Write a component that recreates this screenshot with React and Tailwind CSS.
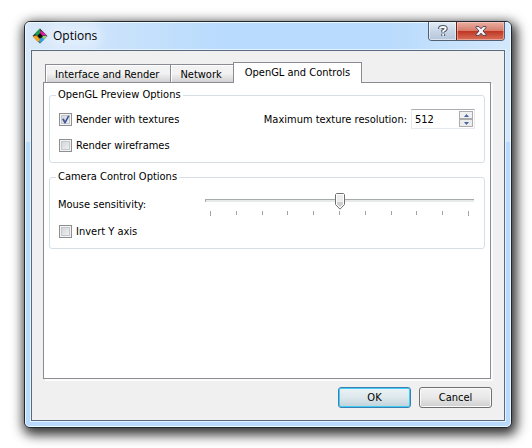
import React, { useState } from 'react';

const TABS = ['Interface and Render', 'Network', 'OpenGL and Controls'];
const TICKS = [0, 1, 2, 3, 4, 5, 6, 7, 8, 9, 10];

const AppIcon = () => (
  <svg viewBox="0 0 16 16" className="h-4 w-4" aria-hidden="true">
    <path d="M8 0.5L15.5 8L8 15.5L0.5 8Z" fill="#2a3a3a" />
    <path d="M8 0.5V5L5 8L3 5.5Z" fill="#1f9f4a" />
    <path d="M8.5 2.5L13.5 6L14 7.5H10.5L8 5Z" fill="#e0109a" />
    <path d="M15 8L12 11.5L10 10L11 8Z" fill="#8fd36a" />
    <path d="M8 15L6.5 12.5L8.5 10L12 10.5V12Z" fill="#2b9fe0" />
    <path d="M1 8.2L4.5 7.5L8 11L7 13.5H5Z" fill="#f5a21b" />
    <path d="M8 5.5L10.5 8L8 10.5L5.5 8Z" fill="#080808" />
  </svg>
);

const TitleBar = () => (
  <div className="flex h-7 items-start justify-between pl-[7px] pr-[6px]">
    <div className="flex items-center pt-[6px]">
      <AppIcon />
      <span className="ml-[5px] rounded-full bg-white/30 font-['Open_Sans','Noto_Sans',sans-serif] text-[12px] leading-4 text-black shadow-[0_0_10px_6px_rgba(255,255,255,0.3)]">
        Options
      </span>
    </div>
    <div className="flex h-[19px] overflow-hidden rounded-b-[4px] border border-t-0 border-[#525f70]">
      <button
        type="button"
        aria-label="Help"
        className="flex w-[27px] items-center justify-center bg-linear-to-b from-[#e3ecf6] from-0% via-[#c9d6e6] via-50% to-[#b4c5dc] shadow-[inset_0_0_0_1px_rgba(255,255,255,0.5)]"
      >
        <svg viewBox="0 0 10 12" className="h-3 w-[10px]" fill="none" aria-hidden="true">
          <path d="M2 4V3.2Q2.5 2 5 2T7.8 3.6Q7.8 4.8 5.2 6V7.5M5.2 8.8V11" stroke="#4b5365" strokeWidth="3.8" />
          <path d="M2 3.8V3.2Q2.5 2 5 2T7.8 3.6Q7.8 4.8 5.2 6V7.3M5.2 9V10.7" stroke="#fff" strokeWidth="1.9" />
        </svg>
      </button>
      <button
        type="button"
        aria-label="Close"
        className="flex w-[48px] items-center justify-center border-l border-[#6e2118] bg-[linear-gradient(to_bottom,#eab0a4,#d67d6c_48%,#bf3722_52%,#d8705a)] shadow-[inset_0_0_0_1px_rgba(255,210,200,0.5)]"
      >
        <svg viewBox="0 0 12 10" className="h-[10px] w-3" aria-hidden="true">
          <path
            d="M1 .6H4L6 2.8L8 .6H11V1.6L8 5L11 8.4V9.4H8L6 7.2L4 9.4H1V8.4L4 5L1 1.6Z"
            fill="#f6f6f6"
            stroke="#54435a"
            strokeWidth="1"
          />
        </svg>
      </button>
    </div>
  </div>
);

const Group = ({ title, className, children }) => (
  <fieldset className={`min-w-0 rounded-[3px] border border-[#d5dfe5] px-2 ${className}`}>
    <legend className="-ml-[2px] px-[2px] leading-[14px]">{title}</legend>
    {children}
  </fieldset>
);

const CheckBox = ({ label, defaultChecked = false }) => (
  <label className="flex h-5 items-center gap-1 pl-px">
    <span className="relative flex h-[13px] w-[13px]">
      <input
        type="checkbox"
        defaultChecked={defaultChecked}
        className="peer h-[13px] w-[13px] appearance-none border border-[#8e8f8f] bg-linear-to-br from-[#cbcfd5] to-[#f6f6f6] shadow-[inset_0_0_0_1px_#f4f4f4,inset_0_0_0_2px_#c3c8ce]"
      />
      <svg
        viewBox="0 0 13 13"
        className="pointer-events-none absolute inset-0 hidden h-[13px] w-[13px] peer-checked:block"
        aria-hidden="true"
      >
        <path d="M3 6L5 5.5L6 8L9 2.5L10.5 3L6.5 10.5H5.5Z" fill="#405399" />
      </svg>
    </span>
    <span className="pt-[2px]">{label}</span>
  </label>
);

const SpinBox = ({ id }) => {
  const [value, setValue] = useState(512);

  return (
    <div className="flex h-5 w-16 border border-[#e3e9ef] border-t-[#abadb3] bg-white py-px pr-px">
      <input
        id={id}
        type="text"
        value={value}
        onChange={(e) => setValue(Number(e.target.value) || 0)}
        className="min-w-0 flex-1 pt-[2px] pl-[3px] outline-none"
      />
      <div className="flex w-[14px] flex-col">
        <button
          type="button"
          aria-label="Increase"
          onClick={() => setValue(value + 1)}
          className="flex flex-1 items-center justify-center border border-[#acacac] bg-[#f0f0f0]"
        >
          <svg viewBox="0 0 5 3" className="h-[3px] w-[5px]" aria-hidden="true">
            <path d="M0 3L2.5 0L5 3Z" fill="#4a62a3" />
          </svg>
        </button>
        <button
          type="button"
          aria-label="Decrease"
          onClick={() => setValue(value - 1)}
          className="flex flex-1 items-center justify-center border border-[#acacac] bg-[#ececec]"
        >
          <svg viewBox="0 0 5 3" className="h-[3px] w-[5px]" aria-hidden="true">
            <path d="M0 0L2.5 3L5 0Z" fill="#4a62a3" />
          </svg>
        </button>
      </div>
    </div>
  );
};

const Slider = ({ id }) => {
  const [value, setValue] = useState(5);

  return (
    <div className="relative flex-1 pt-[6px]">
      <div className="h-[3px] border-t border-l border-t-[#a5aaaa] border-l-[#a5aaaa] bg-[#e7eaea]" />
      <div className="mt-[9px] flex h-[5px] justify-between px-[5px]">
        {TICKS.map((t) => (
          <span key={t} className="h-1 w-px bg-[#a5a498] first:h-[5px] last:h-[5px]" />
        ))}
      </div>
      {/* Thumb */}
      <div className="pointer-events-none absolute inset-x-[5px] top-0">
        <svg
          viewBox="0 0 10 17"
          className="absolute top-0 h-[17px] w-[10px] -translate-x-1/2"
          style={{ left: `${value * 10}%` }}
          aria-hidden="true"
        >
          <path d="M1.5 .5H8.5L9.5 1.5V11.5L5 16.2L.5 11.5V1.5Z" fill="#fff" stroke="#6f6f6f" />
          <path d="M2 2H8V9H2Z" fill="#ededed" />
          <path d="M2 9H8V11.2L5 14.2L2 11.2Z" fill="#cfcfcf" />
        </svg>
      </div>
      <input
        id={id}
        type="range"
        min="0"
        max="10"
        value={value}
        onChange={(e) => setValue(Number(e.target.value))}
        className="absolute inset-x-0 top-0 h-4 w-full opacity-0"
      />
    </div>
  );
};

const Tabs = () => {
  const [active, setActive] = useState(2);

  return (
    <div role="tablist" className="flex h-[21px] items-end pl-[2px]">
      {TABS.map((tab, i) => (
        <button
          key={tab}
          type="button"
          role="tab"
          aria-selected={active === i}
          onClick={() => setActive(i)}
          className={
            active === i
              ? 'relative z-10 h-[21px] border border-b-0 border-[#898c95] bg-white px-[11px]'
              : 'mb-px h-[18px] border border-r-0 border-b-0 border-[#898c95] bg-linear-to-b from-[#f2f2f2] from-50% to-[#d2d2d2] pt-[2px] pr-[11px] pl-[9px] shadow-[inset_1px_1px_0_#fff]'
          }
        >
          {tab}
        </button>
      ))}
    </div>
  );
};

const App = () => (
  <div className="flex min-h-screen bg-white pt-[21px] pr-5 pb-5 pl-6 font-['DejaVu_Sans_Condensed','DejaVu_Sans',sans-serif] text-[11px] text-black">
    <div className="flex flex-1 flex-col rounded-[6px] border border-[#22282f] bg-[#b9dafd] bg-[linear-gradient(to_right,#d9e9fa,#b9dbfd_40%,#b9dbfd_75%,#d3e8fc)] bg-[length:100%_120px] bg-no-repeat shadow-[2px_4px_12px_3px_rgba(0,0,0,0.8)]">
      <div className="flex flex-1 flex-col rounded-[5px] shadow-[inset_0_0_0_1px_rgba(240,250,255,0.9)]">
        <TitleBar />
        <div className="mx-[6px] mb-[6px] flex flex-1 flex-col border border-[#5a6b80] bg-[#f0f0f0] pt-[11px] pr-3 pb-3 pl-[11px] shadow-[0_0_0_1px_#e4f2ff]">
          <Tabs />
          <div
            role="tabpanel"
            className="-mt-px mr-px flex-1 border border-[#898c95] bg-white p-[5px] shadow-[2px_2px_0_#fbfbfb]"
          >
            <Group title="OpenGL Preview Options" className="h-[75px]">
              <div className="flex items-start justify-between pt-[7px] pr-px">
                <CheckBox label="Render with textures" defaultChecked />
                <div className="flex items-center gap-1">
                  <label htmlFor="resolution" className="pt-[2px]">
                    Maximum texture resolution:
                  </label>
                  <SpinBox id="resolution" />
                </div>
              </div>
              <div className="pt-[6px]">
                <CheckBox label="Render wireframes" />
              </div>
            </Group>
            <Group title="Camera Control Options" className="mt-[7px] h-[79px]">
              <div className="flex items-start pt-[9px] pr-[2px]">
                <label htmlFor="sensitivity" className="w-[147px] leading-6">
                  Mouse sensitivity:
                </label>
                <Slider id="sensitivity" />
              </div>
              <div className="pt-1">
                <CheckBox label="Invert Y axis" />
              </div>
            </Group>
          </div>
          <div className="mt-2 flex justify-end gap-2">
            <button
              type="button"
              className="h-[21px] w-[73px] rounded-[3px] border border-[#3c7fb1] bg-linear-to-b from-[#ebf3f6] via-[#dde8ec] via-50% to-[#bfd2da] pt-px shadow-[inset_0_0_0_1px_#3fcdf5]"
            >
              OK
            </button>
            <button
              type="button"
              className="h-[21px] w-[73px] rounded-[3px] border border-[#707070] bg-linear-to-b from-[#f2f2f2] via-[#e8e8e8] via-50% to-[#cfcfcf] pt-px shadow-[inset_0_0_0_1px_#fafafa]"
            >
              Cancel
            </button>
          </div>
        </div>
      </div>
    </div>
  </div>
);

export default App;
